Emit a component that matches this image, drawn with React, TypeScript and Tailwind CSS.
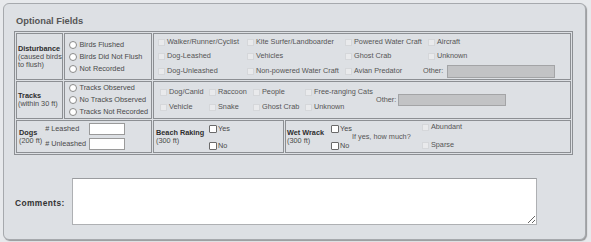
import React from "react";

// small form controls drawn as spans so their size matches the screenshot
const Dis = () => (
  <span className="inline-block w-[7px] h-[7px] shrink-0 bg-[#e9eaec] border border-[#d5d7da]" />
);
const Box = () => (
  <span className="inline-block w-[8px] h-[8px] shrink-0 bg-white border border-[#6a6a6a] rounded-[1px]" />
);
const Radio = () => (
  <span className="inline-block w-[8px] h-[8px] shrink-0 rounded-full bg-white border border-[#8a8a8a]" />
);

function Check({ label }: { label: string }) {
  return (
    <div className="flex items-center gap-[2px] whitespace-nowrap text-[#555]">
      <Dis />
      <span>{label}</span>
    </div>
  );
}

function Opt({ label }: { label: string }) {
  return (
    <div className="flex items-center gap-[2.5px] whitespace-nowrap text-[#4a4a4a]">
      <Radio />
      <span>{label}</span>
    </div>
  );
}

function Tick({ label }: { label: string }) {
  return (
    <div className="flex items-center gap-[1px] whitespace-nowrap text-[#4a4a4a]">
      <Box />
      <span>{label}</span>
    </div>
  );
}

function Label({ title, sub }: { title: string; sub: string[] }) {
  return (
    <div className="leading-[8px] text-[#4a4a4a]">
      <div className="font-bold text-[#2e2e2e]">{title}</div>
      {sub.map((s) => (
        <div key={s}>{s}</div>
      ))}
    </div>
  );
}

const cell = "border border-[#8c8f93] flex items-center";

export default function App() {
  return (
    <div className="w-[591px] h-[242px] bg-[#e7e9ec] pt-[3px] pl-[3px] font-['Liberation_Sans',Arial,sans-serif] text-[7.3px]">
      <div className="w-[583px] h-[237px] rounded-[6px] border border-[#a6a9ad] bg-[#dde0e4] shadow-[1px_1px_1px_rgba(0,0,0,0.35)] pl-[10px] pt-[11px]">
        <h2 className="pl-[2px] h-[12px] leading-[12px] text-[9.3px] font-bold text-[#555]">Optional Fields</h2>

        {/* options table */}
        <div className="mt-[4px] w-[559px] border border-[#8c8f93] p-px flex flex-col gap-px">
          {/* disturbance */}
          <div className="flex gap-px h-[47px]">
            <div className={`${cell} w-[47px] pl-px`}>
              <Label title="Disturbance" sub={["(caused birds", "to flush)"]} />
            </div>
            <div className={`${cell} w-[88px] pl-[4px]`}>
              <div className="flex flex-col leading-[12px]">
                <Opt label="Birds Flushed" />
                <Opt label="Birds Did Not Flush" />
                <Opt label="Not Recorded" />
              </div>
            </div>
            <div className={`${cell} w-[418px] pl-[4px]`}>
              <div className="grid grid-cols-[89px_98px_83px_1fr] grid-rows-[14.5px_14.5px_14.5px] items-center">
                <Check label="Walker/Runner/Cyclist" />
                <Check label="Kite Surfer/Landboarder" />
                <Check label="Powered Water Craft" />
                <Check label="Aircraft" />
                <Check label="Dog-Leashed" />
                <Check label="Vehicles" />
                <Check label="Ghost Crab" />
                <Check label="Unknown" />
                <Check label="Dog-Unleashed" />
                <Check label="Non-powered Water Craft" />
                <Check label="Avian Predator" />
                <div className="flex items-center gap-[3.5px] ml-[-5px] text-[#555]">
                  <span>Other:</span>
                  <span className="w-[108px] h-[13px] bg-[#c2c3c5] border border-[#a3a4a6]" />
                </div>
              </div>
            </div>
          </div>

          {/* tracks */}
          <div className="flex gap-px h-[38px]">
            <div className={`${cell} w-[47px] pl-px`}>
              <Label title="Tracks" sub={["(within 30 ft)"]} />
            </div>
            <div className={`${cell} w-[88px] pl-[4px]`}>
              <div className="flex flex-col leading-[11.7px]">
                <Opt label="Tracks Observed" />
                <Opt label="No Tracks Observed" />
                <Opt label="Tracks Not Recorded" />
              </div>
            </div>
            <div className={`${cell} w-[418px] pl-[6px]`}>
              <div className="grid grid-cols-[49px_44px_52px_71px_1fr] grid-rows-[15px_15px] items-center">
                <Check label="Dog/Canid" />
                <Check label="Raccoon" />
                <Check label="People" />
                <Check label="Free-ranging Cats" />
                <div className="row-span-2 flex items-center gap-[2px] text-[#555]">
                  <span>Other:</span>
                  <span className="w-[108px] h-[12px] bg-[#c2c3c5] border border-[#a3a4a6]" />
                </div>
                <Check label="Vehicle" />
                <Check label="Snake" />
                <Check label="Ghost Crab" />
                <Check label="Unknown" />
              </div>
            </div>
          </div>

          {/* dogs / raking / wrack */}
          <div className="flex gap-px h-[33px]">
            <div className={`${cell} w-[136px] pl-[2px]`}>
              <Label title="Dogs" sub={["(200 ft)"]} />
              <div className="ml-[3px] flex flex-col gap-[3px] text-[#4a4a4a]">
                <div className="flex items-center h-[12px]">
                  <span className="w-[44px]"># Leashed</span>
                  <span className="w-[36px] h-[12px] bg-white border border-[#9a9a9a]" />
                </div>
                <div className="flex items-center h-[12px]">
                  <span className="w-[44px]"># Unleashed</span>
                  <span className="w-[36px] h-[12px] bg-white border border-[#9a9a9a]" />
                </div>
              </div>
            </div>
            <div className={`${cell} w-[131px] pl-[2px]`}>
              <div className="w-[53px]">
                <Label title="Beach Raking" sub={["(300 ft)"]} />
              </div>
              <div className="flex flex-col gap-[6px] mt-[2px]">
                <Tick label="Yes" />
                <Tick label="No" />
              </div>
            </div>
            <div className={`${cell} w-[286px] pl-[1px]`}>
              <div className="w-[44px]">
                <Label title="Wet Wrack" sub={["(300 ft)"]} />
              </div>
              <div className="flex flex-col gap-[6px] mt-[2px]">
                <Tick label="Yes" />
                <Tick label="No" />
              </div>
              <span className="ml-0 mt-[1px] w-[70px] text-[#555]">If yes, how much?</span>
              <div className="flex flex-col gap-[7px]">
                <Check label="Abundant" />
                <Check label="Sparse" />
              </div>
            </div>
          </div>
        </div>

        {/* comments */}
        <div className="mt-[23px] flex items-center">
          <label className="w-[58px] pl-[1px] pt-[3px] text-[8.4px] font-bold tracking-[0.4px] text-[#333]">Comments:</label>
          <textarea
            readOnly
            className="w-[465px] h-[47px] bg-white border border-[#aeb0b3] border-t-[#9a9c9f] resize"
          />
        </div>
      </div>
    </div>
  );
}
